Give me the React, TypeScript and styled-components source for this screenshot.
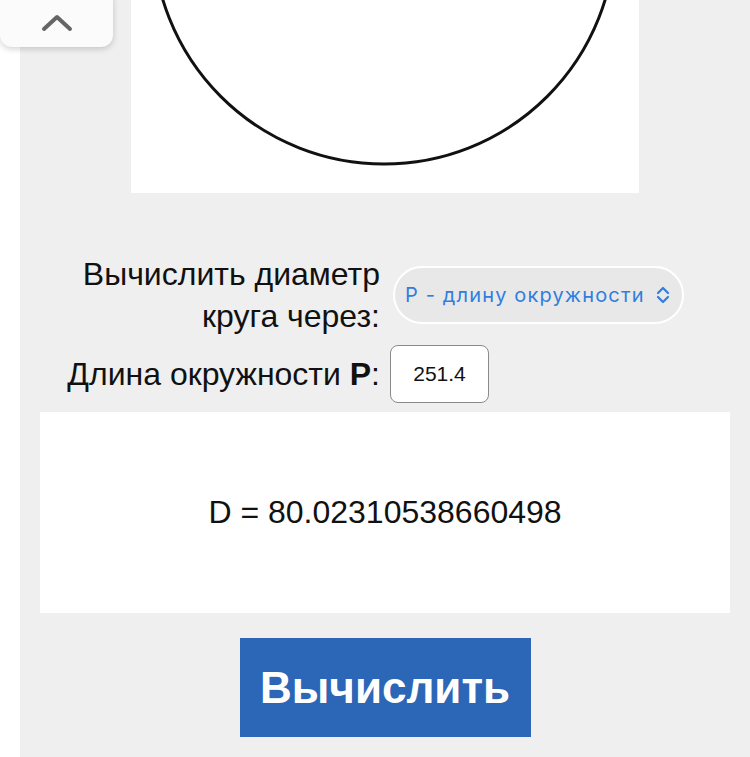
import React, { useState } from 'react';
import styled, { createGlobalStyle } from 'styled-components';

// --- ESTILOS ---

const GlobalStyle = createGlobalStyle`
  html, body {
    margin: 0;
    padding: 0;
    background: #ffffff;
    font-family: 'Liberation Sans', Arial, sans-serif;
  }
`;

const Page = styled.div`
  position: relative;
  width: 750px;
  height: 757px;
  overflow: hidden;
  background: #ffffff;
`;

const Panel = styled.div`
  margin-left: 20px;
  width: 730px;
  height: 757px;
  background: #efefef;
  box-sizing: border-box;
  padding: 0 20px;
  display: flex;
  flex-direction: column;
  align-items: center;
`;

const ScrollTop = styled.button`
  position: absolute;
  left: 0;
  top: -12px;
  width: 113px;
  height: 59px;
  padding-top: 12px;
  border: none;
  border-radius: 12px;
  background: #fbfbfb;
  box-shadow: 0 2px 6px rgba(0, 0, 0, 0.18);
  display: flex;
  align-items: center;
  justify-content: center;
  cursor: pointer;
`;

const Figure = styled.div`
  width: 508px;
  height: 193px;
  background: #ffffff;
  flex-shrink: 0;
`;

const Form = styled.div`
  align-self: stretch;
  display: grid;
  grid-template-columns: 340px auto;
  column-gap: 10px;
  row-gap: 8px;
  align-items: center;
  margin-top: 60px;
`;

const Label = styled.label`
  text-align: right;
  font-size: 32px;
  line-height: 42px;
  color: #111;
  white-space: nowrap;
`;

const Select = styled.div`
  justify-self: start;
  margin-left: 3px;
  height: 54px;
  padding: 0 12px 0 10px;
  border: 2px solid #ffffff;
  border-radius: 30px;
  background: #e8e8e8;
  display: flex;
  align-items: center;
  gap: 11px;
  color: #2f7ee0;
  font-family: Inter, 'Liberation Sans', sans-serif;
  font-size: 20px;
  letter-spacing: 1.15px;
`;

const Input = styled.input`
  justify-self: start;
  width: 99px;
  height: 58px;
  box-sizing: border-box;
  border: 1.5px solid #8a8a8a;
  border-radius: 8px;
  background: #fff;
  text-align: center;
  font-family: inherit;
  font-size: 21px;
  color: #111;
  outline: none;
`;

const Result = styled.div`
  align-self: stretch;
  height: 201px;
  margin-top: 9px;
  background: #ffffff;
  display: flex;
  align-items: center;
  justify-content: center;
  font-size: 32px;
  color: #111;
`;

const CalcButton = styled.button`
  margin-top: 25px;
  width: 291px;
  height: 99px;
  border: none;
  background: #2c66b6;
  color: #ffffff;
  font-family: inherit;
  font-weight: bold;
  font-size: 44px;
  cursor: pointer;
`;

// --- COMPONENTE ---

export default function App() {
  const [length, setLength] = useState('251.4');
  const [result, setResult] = useState('80.02310538660498');

  const calc = () => {
    const p = parseFloat(length.replace(',', '.'));
    if (!isNaN(p)) setResult(String(p / 3.1416));
  };

  return (
    <>
      <GlobalStyle />
      <Page>
        <ScrollTop aria-label="Наверх">
          <svg width="34" height="20" viewBox="0 0 34 20">
            <path d="M4 16 L17 4 L30 16" fill="none" stroke="#666" strokeWidth="4" strokeLinecap="round" strokeLinejoin="round" />
          </svg>
        </ScrollTop>
        <Panel>
          <Figure>
            {/* окружность, верхняя часть обрезана */}
            <svg width="508" height="193" viewBox="0 0 508 193">
              <circle cx="253" cy="-67" r="231" fill="none" stroke="#111" strokeWidth="3" />
            </svg>
          </Figure>

          <Form>
            <Label>Вычислить диаметр<br />круга через:</Label>
            <Select>
              P - длину окружности
              <svg width="14" height="18" viewBox="0 0 14 18">
                <path d="M2 7 L7 2 L12 7 M2 11 L7 16 L12 11" fill="none" stroke="#2f7ee0" strokeWidth="2.2" strokeLinecap="round" strokeLinejoin="round" />
              </svg>
            </Select>

            <Label>Длина окружности <b>P</b>:</Label>
            <Input value={length} onChange={(e) => setLength(e.target.value)} />
          </Form>

          <Result>D = {result}</Result>

          <CalcButton onClick={calc}>Вычислить</CalcButton>
        </Panel>
      </Page>
    </>
  );
}
